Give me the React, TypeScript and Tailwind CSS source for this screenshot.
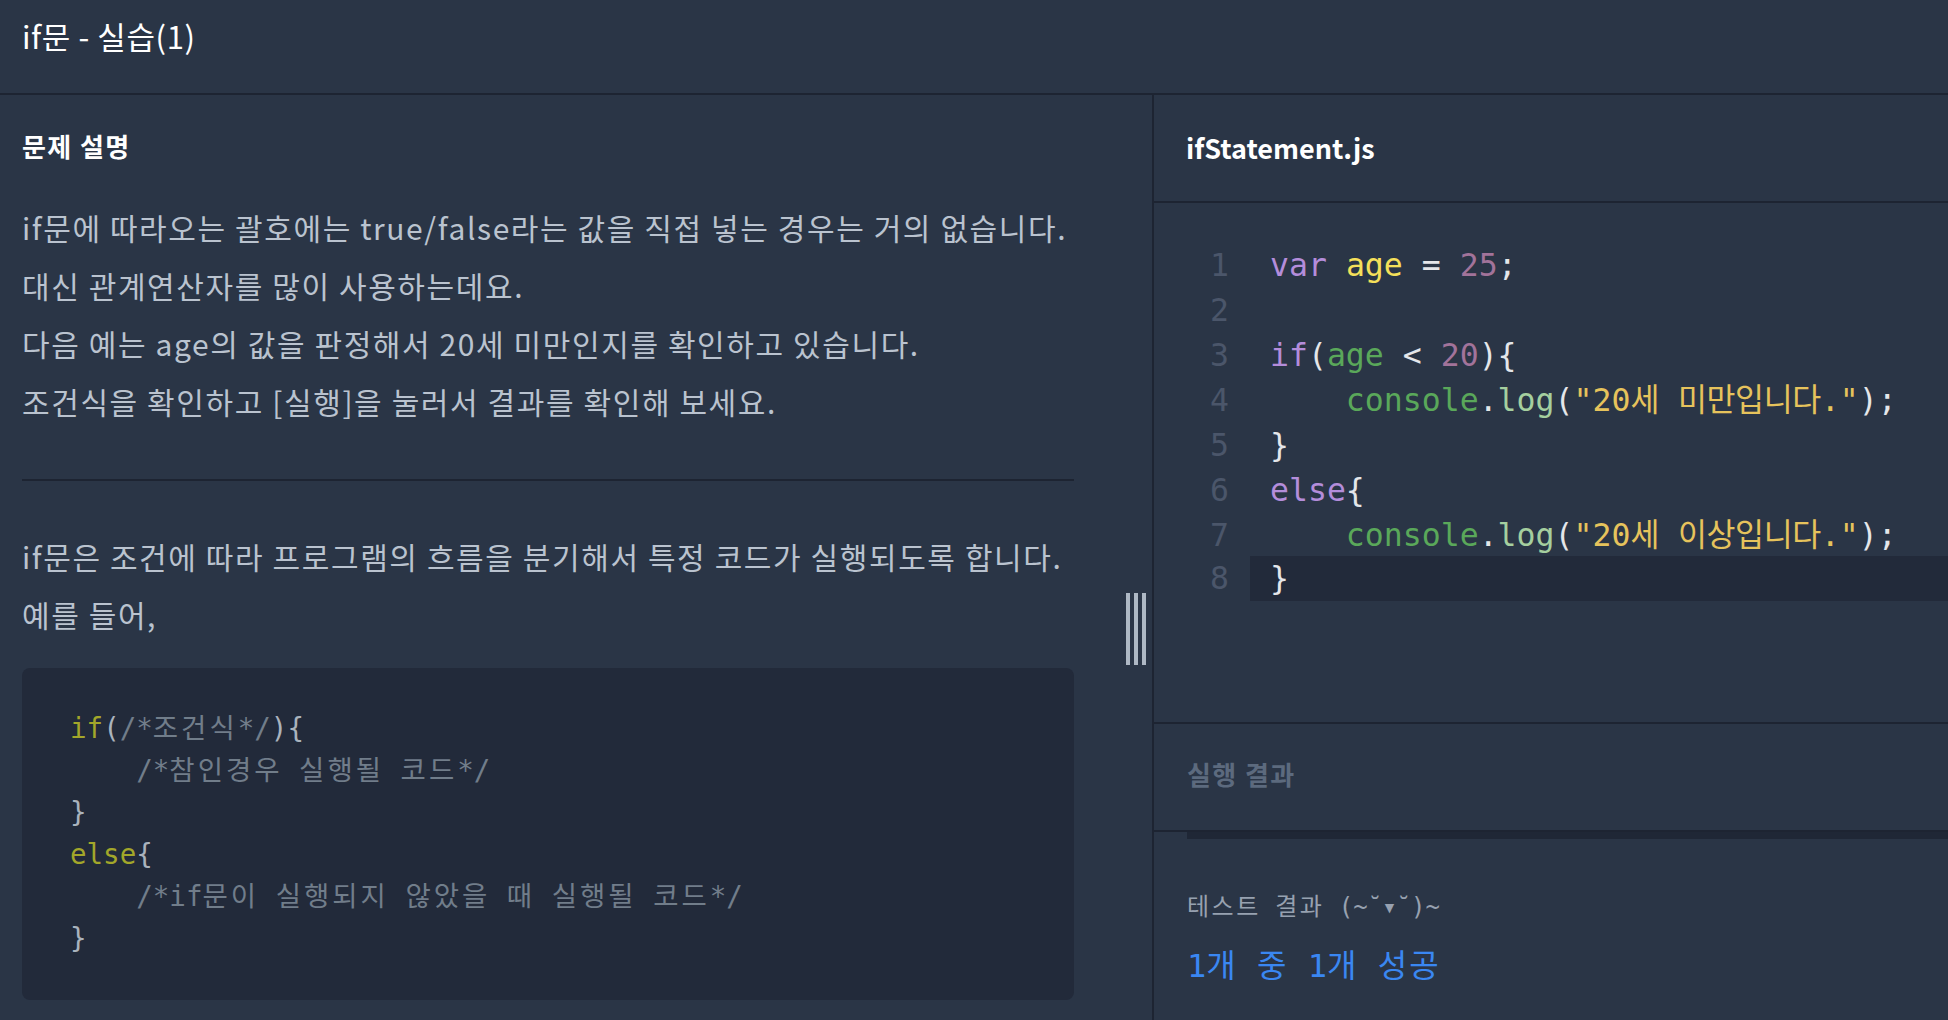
import React from "react";

const mono = "font-['DejaVu_Sans_Mono','Noto_Sans_CJK_KR',monospace]";

type Tok = { t: string; c: string };

const P = "text-[#e4e6ea]";
const KW = "text-[#b48ddb]";
const VAR = "text-[#f5e05a]";
const NUM = "text-[#a2739a]";
const ID = "text-[#5aa85a]";
const FN = "text-[#a5cf9f]";
const STR = "text-[#e6c35c]";

const editorLines: Tok[][] = [
  [
    { t: "var", c: KW },
    { t: " ", c: P },
    { t: "age", c: VAR },
    { t: " = ", c: P },
    { t: "25", c: NUM },
    { t: ";", c: P },
  ],
  [],
  [
    { t: "if", c: KW },
    { t: "(", c: P },
    { t: "age", c: ID },
    { t: " < ", c: P },
    { t: "20", c: NUM },
    { t: "){", c: P },
  ],
  [
    { t: "    ", c: P },
    { t: "console", c: ID },
    { t: ".", c: P },
    { t: "log", c: FN },
    { t: "(", c: P },
    { t: '"20세 미만입니다."', c: STR },
    { t: ");", c: P },
  ],
  [{ t: "}", c: P }],
  [
    { t: "else", c: KW },
    { t: "{", c: P },
  ],
  [
    { t: "    ", c: P },
    { t: "console", c: ID },
    { t: ".", c: P },
    { t: "log", c: FN },
    { t: "(", c: P },
    { t: '"20세 이상입니다."', c: STR },
    { t: ");", c: P },
  ],
  [{ t: "}", c: P }],
];

const OL = "text-[#a3a72a]";
const BR = "text-[#aab3bd]";
const CM = "text-[#717d8a]";

const exampleLines: Tok[][] = [
  [
    { t: "if", c: OL },
    { t: "(", c: BR },
    { t: "/*조건식*/", c: CM },
    { t: "){", c: BR },
  ],
  [{ t: "    /*참인경우 실행될 코드*/", c: CM }],
  [{ t: "}", c: BR }],
  [
    { t: "else", c: OL },
    { t: "{", c: BR },
  ],
  [{ t: "    /*if문이 실행되지 않았을 때 실행될 코드*/", c: CM }],
  [{ t: "}", c: BR }],
];

// hangul in the mono fallback runs a bit narrower than in the reference,
// so hangul runs get their own tracking
function Mixed({ text, hangul }: { text: string; hangul: string }) {
  return (
    <>
      {text.split(/([\uAC00-\uD7A3]+)/).map((part, i) =>
        /[\uAC00-\uD7A3]/.test(part) ? (
          <span key={i} className={hangul}>
            {part}
          </span>
        ) : (
          part
        ),
      )}
    </>
  );
}

function Tokens({ line, hangul }: { line: Tok[]; hangul: string }) {
  return (
    <>
      {line.map((tok, i) => (
        <span key={i} className={tok.c}>
          <Mixed text={tok.t} hangul={hangul} />
        </span>
      ))}
    </>
  );
}

export default function App() {
  const activeLine = 7;
  return (
    <div className="w-[1948px] h-[1020px] overflow-hidden bg-[#2a3546] flex flex-col font-['Noto_Sans_CJK_KR','Noto_Sans',sans-serif]">
      <header className="h-[95px] shrink-0 border-b-2 border-[#1d2432] pl-[22px] pt-[16px]">
        <h1 className="text-[31px] leading-[40px] tracking-[0.6px] text-white">if문 - 실습(1)</h1>
      </header>

      <main className="flex flex-1 min-h-0">
        <section className="relative w-[1154px] shrink-0 border-r-2 border-[#1d2432]">
          <div className="w-[1052px] ml-[22px] pt-[34px]">
            <h2 className="text-[26px] leading-[34px] tracking-[1.4px] font-bold text-white">문제 설명</h2>
            <div className="mt-[35px] text-[30px] leading-[58px] tracking-[1.6px] text-[#bac3cf]">
              <p>if문에 따라오는 괄호에는 true/false라는 값을 직접 넣는 경우는 거의 없습니다.</p>
              <p>대신 관계연산자를 많이 사용하는데요.</p>
              <p>다음 예는 age의 값을 판정해서 20세 미만인지를 확인하고 있습니다.</p>
              <p>조건식을 확인하고 [실행]을 눌러서 결과를 확인해 보세요.</p>
            </div>
            <div className="mt-[49px] h-[2px] bg-[#1d2432]" />
            <div className="mt-[46px] text-[30px] leading-[58px] tracking-[1.6px] text-[#bac3cf]">
              <p>if문은 조건에 따라 프로그램의 흐름을 분기해서 특정 코드가 실행되도록 합니다.</p>
              <p>예를 들어,</p>
            </div>
            <pre
              className={`mt-[25px] rounded-lg bg-[#222a3a] pl-[48px] pt-[39px] pb-[41px] text-[27.5px] leading-[42px] ${mono}`}
            >
              {exampleLines.map((line, i) => (
                <div key={i}>
                  <Tokens line={line} hangul="tracking-[3px]" />
                </div>
              ))}
            </pre>
          </div>

          {/* resize handle */}
          <div className="absolute left-[1126px] top-[498px] flex gap-[4px]">
            <div className="w-[4px] h-[72px] bg-[#aeb8c4]" />
            <div className="w-[4px] h-[72px] bg-[#aeb8c4]" />
            <div className="w-[4px] h-[72px] bg-[#aeb8c4]" />
          </div>
        </section>

        <section className="flex-1 flex flex-col min-w-0">
          <div className="h-[108px] shrink-0 border-b-2 border-[#1d2432] flex items-center pl-[32px]">
            <span className="text-[27px] font-bold text-white">ifStatement.js</span>
          </div>

          <div className={`h-[521px] shrink-0 border-b-2 border-[#1d2432] pt-[40px] text-[31.5px] leading-[45px] ${mono}`}>
            {editorLines.map((line, i) => (
              <div key={i} className={`flex h-[45px] ${i === activeLine ? "-mt-[2px]" : ""}`}>
                <span className="w-[75px] shrink-0 text-right text-[#4b566a]">{i + 1}</span>
                <div
                  className={`ml-[21px] flex-1 pl-[20px] whitespace-pre ${i === activeLine ? "bg-[#222a3a]" : ""}`}
                >
                  <Tokens line={line} hangul="tracking-[-0.4px]" />
                </div>
              </div>
            ))}
          </div>

          <div className="h-[108px] shrink-0 border-b-2 border-[#1d2432] flex items-center pl-[33px] pb-[8px]">
            <span className="text-[26px] font-bold tracking-[1.4px] text-[#5c6a7e]">실행 결과</span>
          </div>
          <div className="ml-[33px] h-[7px] bg-[#1f2736]" />

          <div className={`pl-[33px] ${mono}`}>
            <p className="mt-[51px] text-[24px] leading-[34px] text-[#97a1b0] whitespace-pre">
              <Mixed text="테스트 결과 (~˘▾˘)~" hangul="tracking-[2.5px]" />
            </p>
            <p className="mt-[20px] text-[32px] leading-[44px] text-[#3a87f2] whitespace-pre">
              <Mixed text="1개 중 1개 성공" hangul="tracking-[2px]" />
            </p>
          </div>
        </section>
      </main>
    </div>
  );
}
